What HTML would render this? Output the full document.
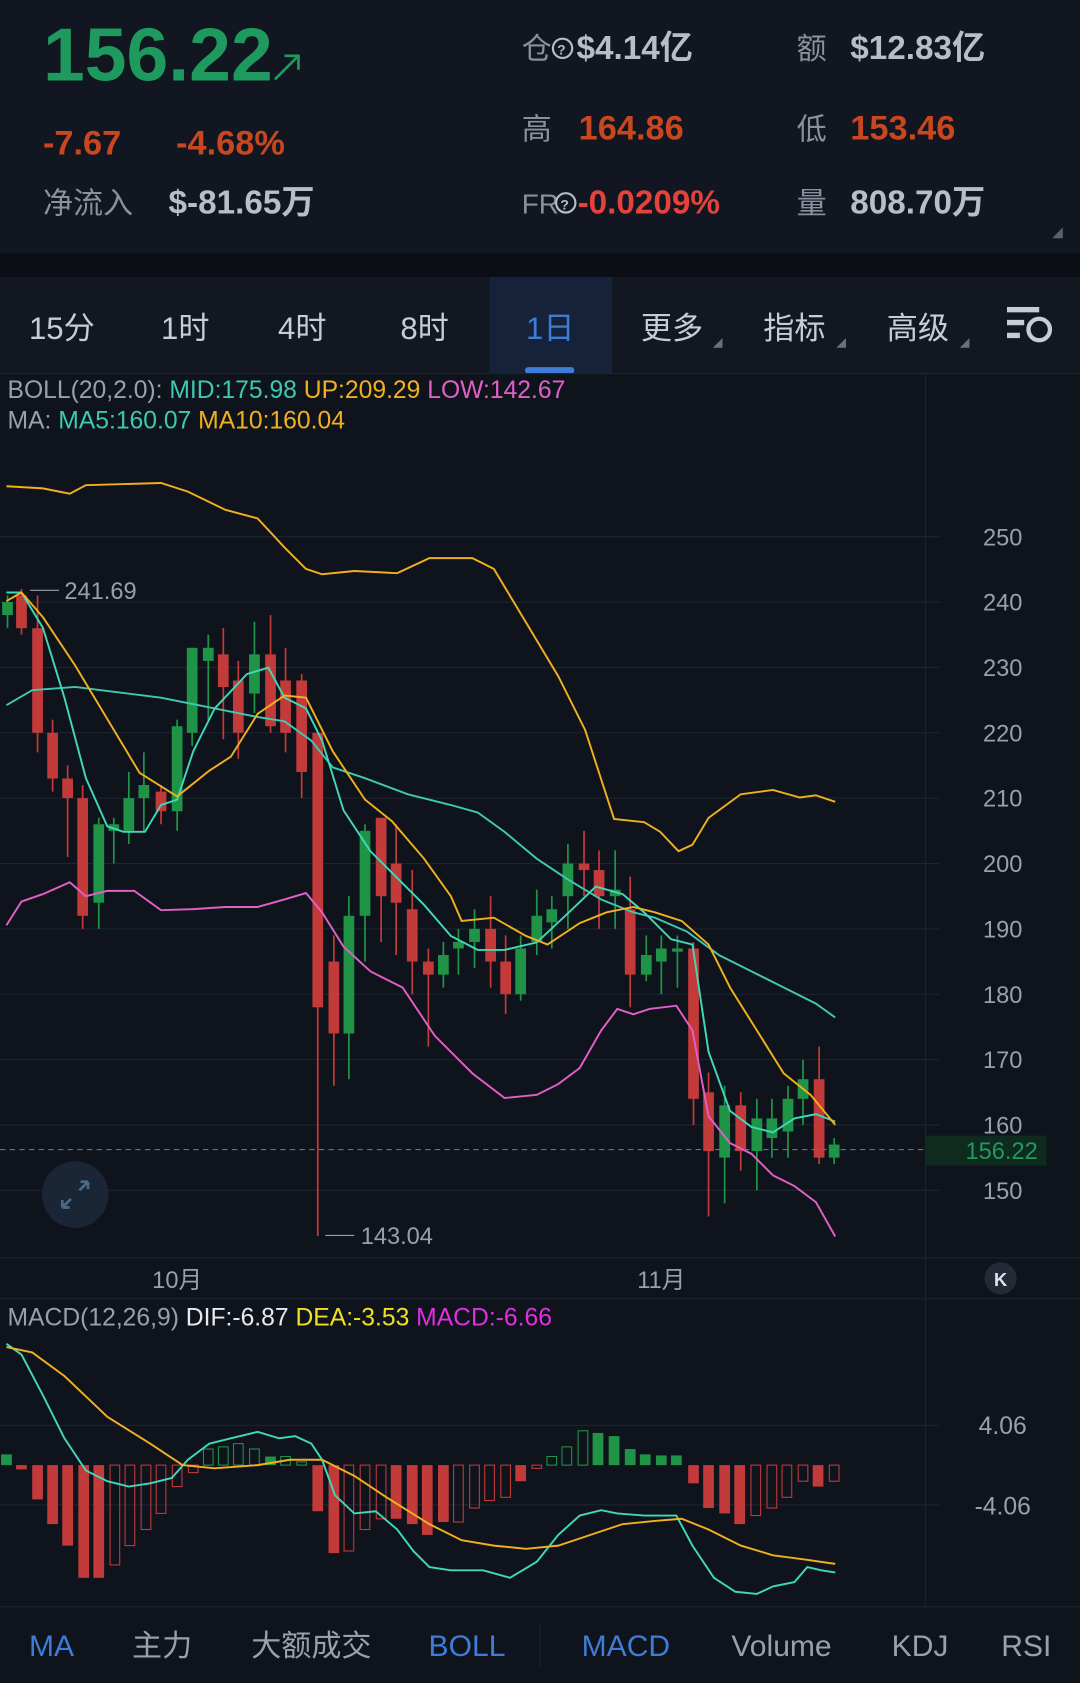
<!DOCTYPE html>
<html><head><meta charset="utf-8"><style>
html,body{margin:0;padding:0;background:#0f131c;width:1080px;height:1683px;overflow:hidden}
svg{display:block}
text{font-family:"Liberation Sans","Noto Sans CJK SC",sans-serif}
</style></head><body>
<svg id="s" width="1080" height="1683" viewBox="0 0 1006 1568" preserveAspectRatio="none" xmlns="http://www.w3.org/2000/svg">
<rect width="1006" height="1568" fill="#0f131c"/>
<rect width="1006" height="240" fill="#111620"/>
<rect y="236" width="1006" height="22" fill="#0b0e14"/>
<rect y="258" width="1006" height="90" fill="#121722"/>
<rect x="456" y="258" width="114" height="90" fill="#16223a"/>
<rect x="489" y="342" width="46" height="6" rx="3" fill="#3d7dd8"/>
<line x1="0" y1="348" x2="1006" y2="348" stroke="#1e2430"/>
<!-- header -->
<text x="40" y="75" font-size="70" font-weight="bold" fill="#1f9a5e">156.22</text>
<path d="M256 74 L278 52 M265 52 H278 V65" stroke="#1f9a5e" stroke-width="2.5" fill="none"/>
<text x="40" y="144" font-size="32" font-weight="bold" fill="#c8471f">-7.67</text>
<text x="164" y="144" font-size="32" font-weight="bold" fill="#c8471f">-4.68%</text>
<text x="40" y="199" font-size="28" fill="#8a909c">净流入</text>
<text x="157" y="199" font-size="31" font-weight="bold" fill="#b8bec8">$-81.65万</text>
<text x="486" y="55" font-size="28" fill="#8a909c">仓</text>
<circle cx="524" cy="45" r="9" fill="none" stroke="#b8bec8" stroke-width="2"/><text x="519" y="51" font-size="13" font-weight="bold" fill="#b8bec8">?</text>
<text x="537" y="55" font-size="31" font-weight="bold" fill="#b8bec8">$4.14亿</text>
<text x="742" y="55" font-size="28" fill="#8a909c">额</text>
<text x="792" y="55" font-size="31" font-weight="bold" fill="#b8bec8">$12.83亿</text>
<text x="486" y="130" font-size="28" fill="#8a909c">高</text>
<text x="539" y="130" font-size="32" font-weight="bold" fill="#c8471f">164.86</text>
<text x="742" y="130" font-size="28" fill="#8a909c">低</text>
<text x="792" y="130" font-size="32" font-weight="bold" fill="#c8471f">153.46</text>
<text x="486" y="199" font-size="26" fill="#8a909c">FR</text>
<circle cx="527" cy="189" r="9" fill="none" stroke="#b8bec8" stroke-width="2"/><text x="522" y="195" font-size="13" font-weight="bold" fill="#b8bec8">?</text>
<text x="538" y="199" font-size="31" font-weight="bold" fill="#e5413d">-0.0209%</text>
<text x="742" y="199" font-size="28" fill="#8a909c">量</text>
<text x="792" y="199" font-size="31" font-weight="bold" fill="#b8bec8">808.70万</text>
<path d="M990 212 V222 H980 Z" fill="#5a606c"/>
<!-- tabs -->
<g font-size="29" fill="#c8ccd4">
<text x="27" y="316">15分</text><text x="150" y="316">1时</text><text x="259" y="316">4时</text><text x="373" y="316">8时</text>
<text x="490" y="316" fill="#3d7dd8">1日</text>
<text x="597" y="316">更多</text><text x="711" y="316">指标</text><text x="826" y="316">高级</text>
</g>
<path d="M673 315 V324 H664 Z M788 315 V324 H779 Z M903 315 V324 H894 Z" fill="#6a707c"/>
<g fill="#c8ccd4"><rect x="938" y="286" width="30" height="5"/><rect x="938" y="298" width="16" height="5"/><rect x="938" y="310" width="12" height="5"/></g>
<circle cx="968" cy="307" r="10" fill="none" stroke="#c8ccd4" stroke-width="4"/>
<!-- legends -->
<text x="7" y="371" font-size="23" fill="#9aa0aa">BOLL(20,2.0): <tspan fill="#3fc8b0">MID:175.98 </tspan><tspan fill="#f0b020">UP:209.29 </tspan><tspan fill="#e060c8">LOW:142.67</tspan></text>
<text x="7" y="399" font-size="23" fill="#9aa0aa">MA: <tspan fill="#3fc8b0">MA5:160.07 </tspan><tspan fill="#f0b020">MA10:160.04</tspan></text>
<g id="grid" stroke="#1e2430" stroke-width="1"></g>
<line x1="862" y1="348" x2="862" y2="1210" stroke="#1e2430"/>
<line x1="0" y1="1172" x2="1006" y2="1172" stroke="#1e2430"/>
<line x1="0" y1="1210" x2="1006" y2="1210" stroke="#1e2430"/>
<g id="ylab" font-size="22" fill="#9aa0aa" text-anchor="middle"></g>
<g id="cand"></g>
<g id="lines" fill="none" stroke-width="1.8"></g>
<text x="60" y="558" font-size="22" fill="#9aa0aa">241.69</text><line x1="28" y1="550" x2="55" y2="550" stroke="#9aa0aa"/>
<text x="336" y="1159" font-size="22" fill="#9aa0aa">143.04</text><line x1="303" y1="1151" x2="330" y2="1151" stroke="#9aa0aa"/>
<line x1="0" y1="1071" x2="862" y2="1071" stroke="#6a707c" stroke-dasharray="5,4"/>
<rect x="862" y="1058" width="113" height="28" fill="#0f2a1e"/>
<text x="933" y="1080" font-size="22" fill="#1f9a5e" text-anchor="middle">156.22</text>
<circle cx="70" cy="1113" r="31" fill="#1a2536"/>
<path d="M58 1125 L66 1117 M58 1125 V1118 M58 1125 H65 M82 1101 L74 1109 M82 1101 V1108 M82 1101 H75" stroke="#4a6a8a" stroke-width="2.5" fill="none"/>
<text x="165" y="1200" font-size="22" fill="#9aa0aa" text-anchor="middle">10月</text>
<text x="616" y="1200" font-size="22" fill="#9aa0aa" text-anchor="middle">11月</text>
<circle cx="932" cy="1191" r="15" fill="#232a36"/>
<text x="932" y="1198" font-size="17" font-weight="bold" fill="#e0e4ea" text-anchor="middle">K</text>
<!-- MACD -->
<text x="7" y="1235" font-size="23" fill="#9aa0aa">MACD(12,26,9) <tspan fill="#e8eaee">DIF:-6.87 </tspan><tspan fill="#f0e020">DEA:-3.53 </tspan><tspan fill="#e030e0">MACD:-6.66</tspan></text>
<line x1="0" y1="1328" x2="875" y2="1328" stroke="#1e2430"/>
<line x1="0" y1="1402" x2="875" y2="1402" stroke="#1e2430"/>
<line x1="862" y1="1210" x2="862" y2="1497" stroke="#1e2430"/>
<text x="934" y="1336" font-size="23" fill="#9aa0aa" text-anchor="middle">4.06</text>
<text x="934" y="1411" font-size="23" fill="#9aa0aa" text-anchor="middle">-4.06</text>
<g id="hist"></g>
<g id="mlines" fill="none" stroke-width="1.8"></g>
<line x1="0" y1="1497" x2="1006" y2="1497" stroke="#1e2430"/>
<line x1="503" y1="1512" x2="503" y2="1555" stroke="#1e2430"/>
<g font-size="28" fill="#9aa0aa" text-anchor="middle">
<text x="48" y="1543" fill="#3d7dd8">MA</text><text x="151" y="1543">主力</text><text x="290" y="1543">大额成交</text>
<text x="435" y="1543" fill="#3d7dd8">BOLL</text><text x="583" y="1543" fill="#3d7dd8">MACD</text>
<text x="728" y="1543">Volume</text><text x="857" y="1543">KDJ</text><text x="956" y="1543">RSI</text>
</g>
</svg>
<script>
var NS="http://www.w3.org/2000/svg";
function el(p,t,a){var e=document.createElementNS(NS,t);for(var k in a)e.setAttribute(k,a[k]);document.getElementById(p).appendChild(e);return e;}
function Y(p){return 500+(250-p)*6.09;}
var labs=[250,240,230,220,210,200,190,180,170,160,150];
labs.forEach(function(v){var y=Y(v);el("grid","line",{x1:0,y1:y,x2:875,y2:y});var t=el("ylab","text",{x:934,y:y+8});t.textContent=v;});
var C=[[7,238,240,241,236],[20,241,236,242,235],[35,236,220,241,217],[49,220,213,222,211],[63,213,210,215,201],[77,210,192,212,190],[92,194,206,207,190],[106,205,206,207,200],[120,205,210,214,203],[134,210,212,217,205],[150,211,208,212,206],[165,208,221,222,205],[179,220,233,233,218],[194,231,233,235,222],[208,232,227,236,219],[222,228,220,231,216],[237,226,232,237,223],[252,232,221,238,220],[266,228,220,233,217],[281,228,214,229,210],[296,220,178,220,143],[311,185,174,189,166],[325,174,192,195,167],[340,192,205,206,185],[355,207,195,207,188],[369,200,194,206,186],[384,193,185,199,180],[399,185,183,187,172],[413,183,186,188,181],[427,187,188,190,183],[442,188,190,193,184],[457,190,185,195,181],[471,185,180,189,177],[485,180,187,189,179],[500,188,192,196,186],[514,191,193,195,187],[529,195,200,203,190],[544,200,199,205,195],[558,199,195,202,190],[573,195,196,202,190],[587,193,183,198,178],[602,183,186,189,182],[616,185,187,189,180],[631,187,187,189,181],[646,187,164,188,160],[660,165,156,168,146],[675,155,163,166,148],[690,163,156,165,153],[705,156,161,164,150],[719,158,161,164,155],[734,159,164,166,155],[748,164,167,170,160],[763,167,155,172,154],[777,155,157,158,154]];
C.forEach(function(c){var g=c[2]>=c[1],col=g?"#1f9447":"#c23a3a";el("cand","line",{x1:c[0],x2:c[0],y1:Y(c[3]),y2:Y(c[4]),stroke:col,"stroke-width":1.6});var t=Math.min(Y(c[1]),Y(c[2])),h=Math.max(3,Math.abs(Y(c[1])-Y(c[2])));el("cand","rect",{x:c[0]-5,y:t,width:10,height:h,fill:col});});
function pl(p,pts,col){el(p,"polyline",{points:pts.map(function(q){return q.join(",")}).join(" "),stroke:col});}
pl("lines",[[6,453],[40,455],[65,460],[80,452],[150,450],[175,458],[210,475],[240,483],[265,510],[285,530],[300,535],[330,532],[370,534],[400,520],[440,520],[460,530],[490,580],[520,630],[545,680],[572,763],[600,766],[615,775],[632,793],[645,787],[660,762],[690,740],[720,736],[745,743],[760,741],[778,747]],"#f0b020");
pl("lines",[[6,862],[20,840],[40,833],[65,822],[80,835],[100,830],[125,830],[150,848],[180,847],[210,845],[240,845],[265,838],[285,832],[300,850],[320,882],[345,905],[375,920],[405,965],[440,1000],[470,1023],[500,1020],[520,1010],[540,995],[560,960],[575,940],[590,945],[605,940],[630,937],[645,960],[660,1040],[680,1065],[700,1075],[720,1095],[740,1105],[760,1120],[778,1152]],"#e060c8");
pl("lines",[[6,657],[30,643],[70,640],[110,645],[150,650],[200,660],[240,668],[265,672],[290,690],[310,715],[340,725],[380,740],[420,750],[445,757],[470,775],[500,800],[530,820],[560,838],[590,850],[610,855],[640,868],[670,890],[700,905],[730,920],[760,935],[778,948]],"#3fc8b0");
pl("lines",[[6,552],[20,552],[40,585],[60,650],[80,725],[100,770],[115,775],[135,775],[150,750],[165,745],[180,700],[200,660],[230,628],[250,622],[265,650],[285,660],[300,690],[320,755],[345,793],[370,818],[395,843],[420,872],[445,885],[470,885],[500,878],[530,850],[555,826],[580,833],[600,850],[625,875],[645,880],[660,980],[680,1035],[700,1050],[720,1055],[740,1042],[760,1038],[778,1045]],"#40d8b8");
pl("lines",[[6,560],[20,552],[40,575],[70,620],[100,670],[130,720],[165,742],[195,718],[215,705],[240,665],[265,648],[285,650],[310,700],[340,745],[365,765],[395,800],[420,835],[430,858],[460,855],[490,872],[510,880],[540,860],[565,850],[590,845],[610,850],[635,858],[660,880],[680,920],[705,960],[730,1000],[755,1020],[778,1048]],"#f0b020");
var Z=1365;
var H=[[6,1355,1,1],[20,1369,0,1],[35,1397,0,1],[49,1420,0,1],[63,1440,0,1],[78,1470,0,1],[92,1470,0,1],[107,1458,0,0],[121,1440,0,0],[136,1425,0,0],[150,1410,0,0],[165,1385,0,0],[180,1372,0,0],[194,1350,1,0],[208,1348,1,0],[222,1345,1,0],[237,1350,1,0],[252,1357,1,1],[266,1357,1,0],[281,1362,1,0],[296,1408,0,1],[311,1447,0,1],[325,1445,0,0],[340,1425,0,0],[355,1415,0,0],[369,1415,0,1],[384,1420,0,1],[398,1430,0,1],[413,1418,0,1],[427,1418,0,0],[442,1405,0,0],[456,1398,0,0],[471,1395,0,0],[485,1380,0,1],[500,1368,0,0],[514,1357,1,0],[528,1348,1,0],[543,1333,1,0],[557,1335,1,1],[572,1338,1,1],[587,1350,1,1],[601,1355,1,1],[616,1356,1,1],[630,1356,1,1],[646,1382,0,1],[660,1405,0,1],[675,1410,0,1],[689,1420,0,1],[704,1412,0,0],[719,1405,0,0],[733,1395,0,0],[748,1380,0,0],[762,1385,0,1],[777,1380,0,0]];
H.forEach(function(h){var col=h[2]?"#1f9447":"#c23a3a";var t=Math.min(Z,h[1]),ht=Math.abs(h[1]-Z);if(h[3])el("hist","rect",{x:h[0]-5,y:t,width:10,height:ht,fill:col});else el("hist","rect",{x:h[0]-4.5,y:t,width:9,height:ht,fill:"none",stroke:col,"stroke-width":1});});
pl("mlines",[[6,1252],[20,1262],[40,1300],[60,1340],[80,1370],[100,1380],[120,1385],[140,1382],[160,1377],[175,1360],[195,1345],[215,1340],[240,1334],[260,1340],[275,1338],[290,1345],[300,1360],[312,1393],[330,1410],[350,1408],[370,1425],[385,1445],[400,1460],[420,1463],[450,1463],[475,1470],[500,1455],[520,1430],[540,1412],[560,1407],[575,1410],[600,1412],[630,1412],[645,1440],[665,1470],[685,1483],[705,1485],[720,1478],[740,1474],[752,1460],[765,1463],[778,1465]],"#40d8b8");
pl("mlines",[[6,1255],[30,1260],[60,1282],[100,1320],[140,1345],[170,1365],[200,1368],[240,1365],[270,1360],[300,1360],[330,1375],[360,1395],[400,1420],[430,1435],[460,1440],[490,1443],[520,1440],[550,1430],[580,1420],[610,1417],[635,1415],[660,1425],[690,1440],[720,1449],[750,1453],[778,1457]],"#f0b020");
</script>
</body></html>
